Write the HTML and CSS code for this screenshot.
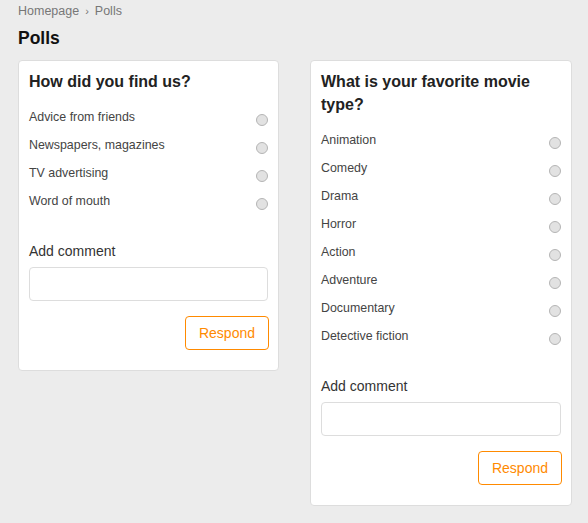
FILE: index.html
```html
<!DOCTYPE html>
<html lang="en">
<head>
<meta charset="utf-8">
<title>Polls</title>
<link rel="stylesheet" href="styles.css">
</head>
<body>
<div class="page">
  <nav class="breadcrumb"><span>Homepage</span><span class="sep">›</span><span>Polls</span></nav>
  <h1 class="page-title">Polls</h1>
  <div class="polls">
    <form class="card">
      <h2 class="card-title">How did you find us?</h2>
      <ul class="options">
        <li class="option"><span>Advice from friends</span><input type="radio" name="q1" class="radio"></li>
        <li class="option"><span>Newspapers, magazines</span><input type="radio" name="q1" class="radio"></li>
        <li class="option"><span>TV advertising</span><input type="radio" name="q1" class="radio"></li>
        <li class="option"><span>Word of mouth</span><input type="radio" name="q1" class="radio"></li>
      </ul>
      <label class="comment-label">Add comment</label>
      <input type="text" class="comment-input">
      <div class="actions"><button type="button" class="btn">Respond</button></div>
    </form>
    <form class="card">
      <h2 class="card-title">What is your favorite movie type?</h2>
      <ul class="options">
        <li class="option"><span>Animation</span><input type="radio" name="q2" class="radio"></li>
        <li class="option"><span>Comedy</span><input type="radio" name="q2" class="radio"></li>
        <li class="option"><span>Drama</span><input type="radio" name="q2" class="radio"></li>
        <li class="option"><span>Horror</span><input type="radio" name="q2" class="radio"></li>
        <li class="option"><span>Action</span><input type="radio" name="q2" class="radio"></li>
        <li class="option"><span>Adventure</span><input type="radio" name="q2" class="radio"></li>
        <li class="option"><span>Documentary</span><input type="radio" name="q2" class="radio"></li>
        <li class="option"><span>Detective fiction</span><input type="radio" name="q2" class="radio"></li>
      </ul>
      <label class="comment-label">Add comment</label>
      <input type="text" class="comment-input">
      <div class="actions"><button type="button" class="btn">Respond</button></div>
    </form>
  </div>
</div>
</body>
</html>
```

FILE: styles.css
```css
html, body {
  margin: 0;
  padding: 0;
  background: #ececec;
  font-family: "Liberation Sans", Arial, sans-serif;
  color: #333;
}
.page {
  padding: 4px 16px 0 18px;
}
.breadcrumb {
  font-size: 12.5px;
  line-height: 15px;
  color: #777;
  display: flex;
  gap: 6px;
}
.breadcrumb .sep {
  font-size: 11px;
}
.page-title {
  margin: 9px 0 0;
  font-size: 17.5px;
  line-height: 20px;
  font-weight: bold;
  color: #111;
}
.polls {
  margin-top: 12px;
  display: grid;
  grid-template-columns: 261px 262px;
  column-gap: 31px;
  align-items: start;
}
.card {
  background: #fff;
  border: 1px solid #ddd;
  border-radius: 4px;
  padding: 9px 10px 20px 10px;
  display: flex;
  flex-direction: column;
}
.card-title {
  margin: 0 0 10px;
  font-size: 16px;
  line-height: 23px;
  font-weight: bold;
  color: #222;
}
.options {
  list-style: none;
  margin: 0;
  padding: 0;
}
.option {
  display: flex;
  align-items: center;
  justify-content: space-between;
  height: 28px;
  font-size: 12.4px;
  color: #444;
}
.radio {
  appearance: none;
  -webkit-appearance: none;
  margin: 6px 0 0 0;
  width: 12px;
  height: 12px;
  border-radius: 50%;
  border: 1px solid #b5b5b5;
  background: #e2e2e2;
  box-sizing: border-box;
}
.comment-label {
  margin-top: 26px;
  font-size: 14px;
  line-height: 20px;
  color: #333;
}
.comment-input {
  margin: 6px 0 0;
  height: 34px;
  box-sizing: border-box;
  border: 1px solid #ddd;
  border-radius: 4px;
  background: #fff;
  width: 100%;
}
.actions {
  display: flex;
  justify-content: flex-end;
  margin-top: 15px;
}
.btn {
  height: 34px;
  width: 84px;
  box-sizing: border-box;
  border: 1px solid #ff8a00;
  border-radius: 4px;
  background: #fff;
  color: #ff8a00;
  font-family: "Liberation Sans", Arial, sans-serif;
  font-size: 14px;
  padding: 0;
  margin-right: -1px;
}
```
